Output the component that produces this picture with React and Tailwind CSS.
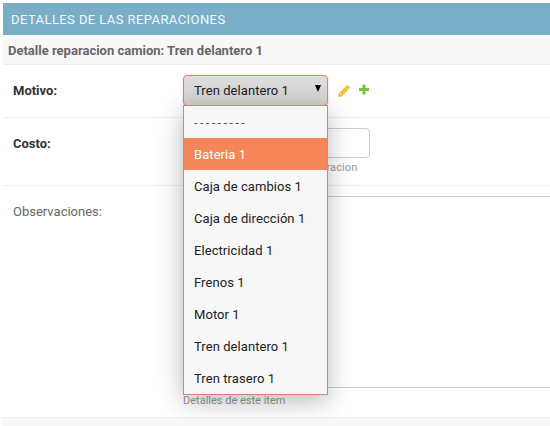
const options = [
  "---------",
  "Bateria 1",
  "Caja de cambios 1",
  "Caja de dirección 1",
  "Electricidad 1",
  "Frenos 1",
  "Motor 1",
  "Tren delantero 1",
  "Tren trasero 1",
];

const App = () => {
  return (
    <div className="h-[426px] w-[550px] overflow-hidden bg-white pl-[3px] pt-[3px] font-['Roboto',sans-serif] text-[13px] text-[#333]">
      <h2 className="h-[32px] bg-[#79aec8] pl-[8px] text-[13px] font-normal uppercase leading-[33px] tracking-[0.42px] text-[#f4f9fb]">
        Detalles de las reparaciones
      </h2>
      <h3 className="h-[30px] border-b border-[#eee] bg-[#f8f8f8] pl-[5px] text-[13px] font-bold leading-[31px] text-[#666]">
        Detalle reparacion camion: Tren delantero 1
      </h3>

      <div className="flex h-[53px] border-b border-[#eee] pl-[10px] pt-[10px]">
        <label className="w-[170px] pt-[6px] font-bold text-[#333]">Motivo:</label>
        <div className="relative flex items-start">
          <div className="relative z-10 flex h-[31px] w-[145px] items-center rounded-[4px] border border-[#d4896f] bg-gradient-to-b from-[#dedede] to-[#d0d0d0] pl-[10px] pt-[1px] text-[13px] tracking-[0.07px] text-[#222] shadow-[0_0_2px_rgba(245,134,90,0.5)]">
            Tren delantero 1
            <span className="absolute right-[6px] top-[9px] h-0 w-0 border-x-[3.5px] border-t-[7px] border-x-transparent border-t-black" />
          </div>
          <a className="ml-[10px] mt-[9px] block">
            <svg width="13" height="13" viewBox="0 0 13 13">
              <path d="M.6 9.4 8.4 1.6a1.2 1.2 0 0 1 1.7 0l1.3 1.3a1.2 1.2 0 0 1 0 1.7L3.6 12.4.3 12.7z" fill="#f2c037" />
              <path d="M1.9 9 4 11.1M7.4 2.9l2.7 2.7" stroke="#fff" strokeWidth="0.7" />
            </svg>
          </a>
          <a className="ml-[7px] mt-[9px] block">
            <svg width="12" height="11" viewBox="0 0 12 11">
              <path d="M4.5 0.5h3v3.5h3.5v3H7.5v3.5h-3V7H1V4h3.5z" fill="#7cc33f" />
            </svg>
          </a>

          <ul className="absolute left-0 top-[30px] z-20 w-[145px] border border-[#d4896f] bg-[#f7f7f7] shadow-[0_6px_24px_rgba(0,0,0,0.28)]">
            {options.map((option, i) => (
              <li
                key={option}
                className={
                  option === "Bateria 1"
                    ? "h-[32px] bg-[#f5865a] pl-[10px] pt-[1px] text-[13px] leading-[32px] tracking-[0.07px] text-white"
                    : i === 0
                      ? "h-[32px] pl-[10px] pt-[1px] text-[13px] leading-[32px] tracking-[2.3px] text-[#555]"
                      : "h-[32px] pl-[10px] pt-[1px] text-[13px] leading-[32px] tracking-[0.07px] text-[#222]"
                }
              >
                {option}
              </li>
            ))}
          </ul>
        </div>
      </div>

      <div className="flex h-[68px] border-b border-[#eee] pl-[10px] pt-[10px]">
        <label className="w-[170px] pt-[6px] font-bold text-[#333]">Costo:</label>
        <div>
          <input className="block h-[30px] w-[187px] rounded-[4px] border border-[#ccc] bg-white" />
          <p className="mt-[3px] text-[11px] leading-[14px] tracking-[0.1px] text-[#999]">Ingrese el costo de esta reparacion</p>
        </div>
      </div>

      <div className="flex h-[232px] border-b border-[#eee] pl-[10px] pt-[10px]">
        <label className="w-[170px] pt-[6px] font-normal text-[#666]">Observaciones:</label>
        <div className="flex-1">
          <textarea className="block h-[192px] w-full resize-none border-y border-[#ccc] bg-white" />
          <p className="mt-[6px] text-[11px] leading-[14px] text-[#999]">Detalles de este item</p>
        </div>
      </div>

      <div className="h-[20px] bg-[#f8f8f8]" />
    </div>
  );
};

export default App;
